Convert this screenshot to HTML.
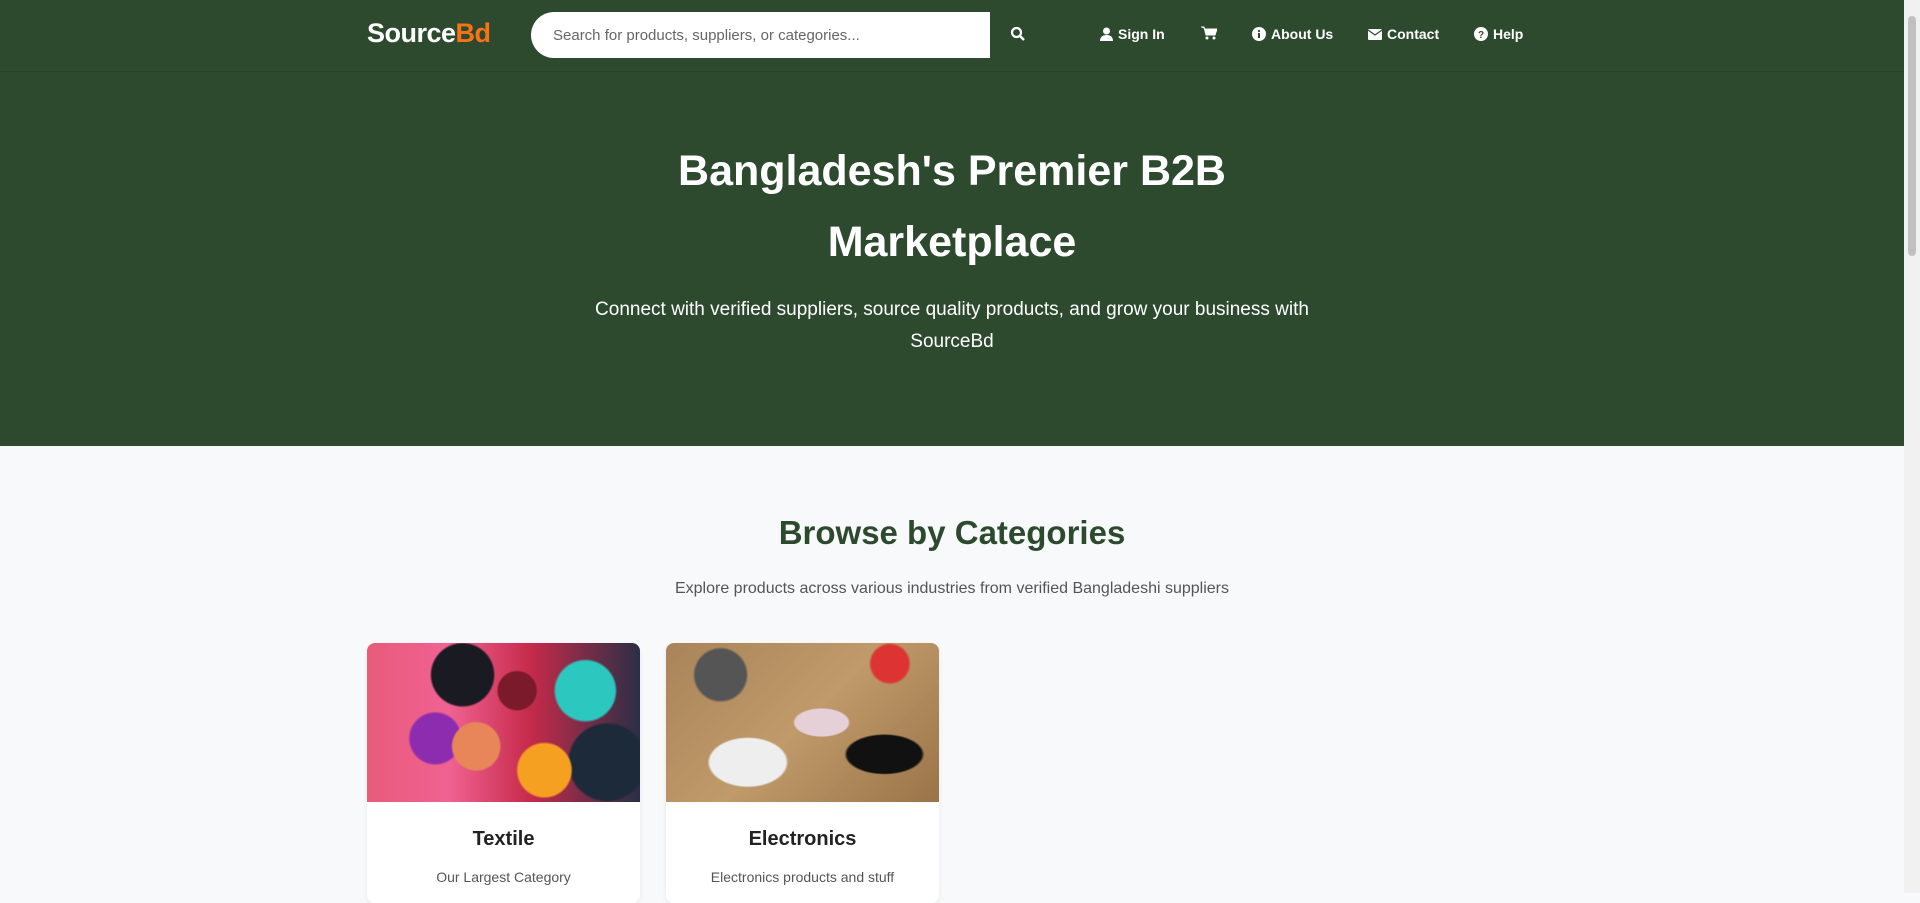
<!DOCTYPE html>
<html><head><meta charset="utf-8"><style>
*{margin:0;padding:0;box-sizing:border-box}
html,body{width:1920px;height:893px;overflow:hidden;font-family:"Liberation Sans",sans-serif;background:#f8f9fa}
.sb{position:absolute;right:0;top:0;width:16px;height:893px;background:#f1f1f1}
.sb div{position:absolute;left:4px;top:16px;width:8px;height:240px;background:#c1c1c1;border-radius:4px}
nav{position:absolute;left:0;top:0;width:1904px;height:72px;background:#2d4a2f;border-bottom:1px solid #284229}
.logo{position:absolute;left:367px;top:18px;font-size:27px;font-weight:bold;color:#fff;letter-spacing:-0.5px}
.logo span{color:#f97316}
.search{position:absolute;left:531px;top:12px;width:459px;height:46px;background:#fff;border-radius:23px 0 0 23px;font-size:15px;color:#666;padding:15px 0 0 22px}
.sbtn{position:absolute;left:1010px;top:26px}
.nl{position:absolute;top:26px;color:#fff;font-size:14px;font-weight:bold;display:flex;align-items:center;gap:5px}
.hero{position:absolute;left:0;top:72px;width:1904px;height:374px;background:#2d4a2f;color:#fff;text-align:center}
.hero h1{position:absolute;left:0;width:100%;top:64px;font-size:43px;line-height:71px;font-weight:bold}
.hero p{position:absolute;left:0;width:100%;top:222px;font-size:19px;line-height:32px}
h2{position:absolute;left:0;width:1904px;top:514px;text-align:center;font-size:33px;color:#2d4a2f;font-weight:bold}
.sub{position:absolute;left:0;width:1904px;top:580px;text-align:center;font-size:16px;color:#555}
.card{position:absolute;top:643px;width:273px;height:260px;background:#fff;border-radius:8px;overflow:hidden;box-shadow:0 2px 6px rgba(0,0,0,.06);text-align:center}
.img{height:159px}
.card h3{margin-top:26px;font-size:20px;color:#222}
.card p{margin-top:18px;font-size:14px;color:#555}
</style></head><body>
<nav>
<div class="logo">Source<span>Bd</span></div>
<div class="search">Search for products, suppliers, or categories...</div>
<svg class="sbtn" width="16" height="16" viewBox="0 0 16 16"><circle cx="6.5" cy="6.5" r="4.5" stroke="#fff" stroke-width="2.2" fill="none"/><path d="M10 10l4 4" stroke="#fff" stroke-width="2.4"/></svg>
<div class="nl" style="left:1100px"><svg width="13" height="14" viewBox="0 0 13 14"><circle cx="6.5" cy="4" r="3.5" fill="#fff"/><path d="M0 14c0-4 2.5-6 6.5-6s6.5 2 6.5 6z" fill="#fff"/></svg>Sign In</div>
<div class="nl" style="left:1201px"><svg width="16" height="14" viewBox="0 0 16 14"><path d="M0 1h3l2 8h9l2-6H4" fill="#fff" stroke="#fff"/><circle cx="6" cy="12" r="1.5" fill="#fff"/><circle cx="13" cy="12" r="1.5" fill="#fff"/></svg></div>
<div class="nl" style="left:1252px"><svg width="14" height="14"><circle cx="7" cy="7" r="7" fill="#fff"/><rect x="6" y="6" width="2" height="5" fill="#2d4a2f"/><circle cx="7" cy="4" r="1.1" fill="#2d4a2f"/></svg>About Us</div>
<div class="nl" style="left:1368px"><svg width="14" height="11"><rect width="14" height="11" rx="1" fill="#fff"/><path d="M0 1l7 5 7-5" stroke="#2d4a2f" fill="none" stroke-width="1.3"/></svg>Contact</div>
<div class="nl" style="left:1474px"><svg width="14" height="14"><circle cx="7" cy="7" r="7" fill="#fff"/><text x="7" y="11" font-size="10" font-weight="bold" text-anchor="middle" fill="#2d4a2f" font-family="Liberation Sans">?</text></svg>Help</div>
</nav>
<div class="hero"><h1>Bangladesh's Premier B2B<br>Marketplace</h1><p>Connect with verified suppliers, source quality products, and grow your business with<br>SourceBd</p></div>
<h2>Browse by Categories</h2>
<div class="sub">Explore products across various industries from verified Bangladeshi suppliers</div>
<div class="card" style="left:367px"><div class="img" style="background:radial-gradient(circle at 80% 30%,#2cc8c0 0 12%,transparent 13%),radial-gradient(circle at 55% 30%,#7a1a2a 0 10%,transparent 11%),radial-gradient(circle at 40% 65%,#e8865a 0 12%,transparent 13%),radial-gradient(circle at 25% 60%,#8e2cb0 0 11%,transparent 12%),radial-gradient(circle at 65% 80%,#f5a020 0 12%,transparent 13%),radial-gradient(circle at 88% 75%,#1c2a3a 0 14%,transparent 15%),radial-gradient(circle at 35% 20%,#1a1a22 0 14%,transparent 15%),linear-gradient(90deg,#e95b7a,#f06292 30%,#c62a4a 60%,#2a2f45)"></div><h3>Textile</h3><p>Our Largest Category</p></div>
<div class="card" style="left:666px"><div class="img" style="background:radial-gradient(ellipse at 80% 70%,#111 0 12%,transparent 13%),radial-gradient(ellipse at 57% 50%,#e5d0d8 0 12%,transparent 13%),radial-gradient(ellipse at 30% 75%,#eee 0 14%,transparent 15%),radial-gradient(circle at 20% 20%,#555 0 10%,transparent 11%),radial-gradient(circle at 82% 13%,#d33 0 7%,transparent 8%),linear-gradient(135deg,#a88458,#c09a6a 50%,#9a7448)"></div><h3>Electronics</h3><p>Electronics products and stuff</p></div>
<div class="sb"><div></div></div>
</body></html>
